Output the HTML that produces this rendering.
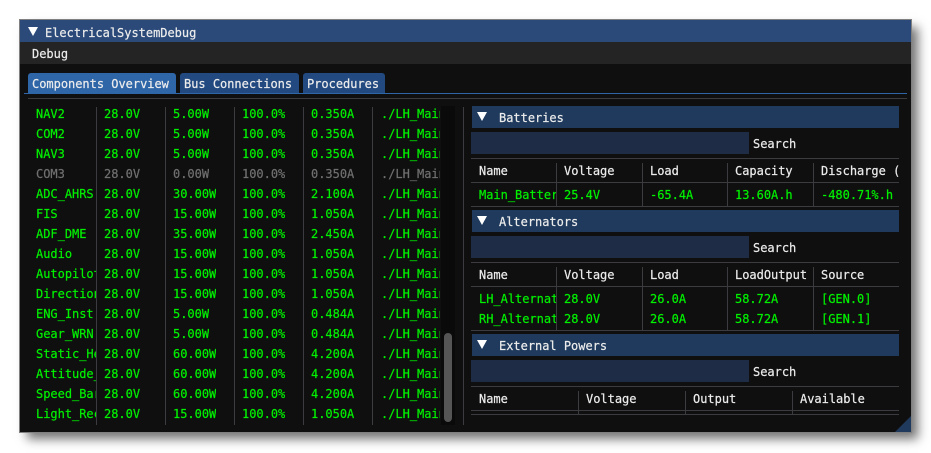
<!DOCTYPE html>
<html><head><meta charset="utf-8"><style>
html,body{margin:0;padding:0;background:#fff;width:931px;height:453px;overflow:hidden}
*{box-sizing:border-box}
#p{position:relative;width:931px;height:453px;overflow:hidden;font:12px/20px "DejaVu Sans Mono","Liberation Mono",monospace;letter-spacing:-.02px;color:#ececec;-webkit-text-stroke:.2px currentColor}
#w{position:absolute;left:20px;top:20px;width:891px;height:412px;background:#0f0f0f;box-shadow:0 0 0 1px #808080,7px 7px 10px rgba(0,0,0,.55)}
.a{position:absolute;white-space:nowrap}
.bar{position:absolute;left:472px;width:427px;height:22px;background:#1f3a5c;padding-left:27px;line-height:24px}
.tri{position:absolute;width:0;height:0;border-left:5.5px solid transparent;border-right:5.5px solid transparent;border-top:9px solid #fff}
.inp{position:absolute;left:471px;width:278px;height:22px;background:#1e2d45}
.h{position:absolute;left:471px;width:428px;height:1px;background:#3c3c40}
.v{position:absolute;width:1px;background:#3c3c40}
.tab{position:absolute;top:73px;height:20px;background:#234a80;border-radius:3px 3px 0 0;line-height:23px;padding-left:4px}
.r{position:absolute;left:0;width:931px;height:20px;color:#00f000}
.r span{position:absolute;top:0;white-space:nowrap;overflow:hidden}
.r.off{color:#707070}
.s1{left:36px;width:60px}.s2{left:104px}.s3{left:173px}.s4{left:242px}.s5{left:311px}.s6{left:381px;width:59px}
.g{color:#00f000}
</style></head><body><div id="p">
<div id="w"></div>
<div class="a" style="left:20px;top:20px;width:891px;height:22px;background:#2b4a7a"></div>
<div class="a" style="left:20px;top:42px;width:891px;height:22px;background:#242424"></div>
<div class="tri" style="left:28px;top:27px"></div>
<div class="a" style="left:45px;top:23px">ElectricalSystemDebug</div>
<div class="a" style="left:32px;top:44px">Debug</div>

<div class="tab" style="left:28px;width:148px;background:#2f66a8">Components Overview</div>
<div class="tab" style="left:180px;width:119px">Bus Connections</div>
<div class="tab" style="left:303px;width:82px">Procedures</div>
<div class="a" style="left:24px;top:93px;width:883px;height:1px;background:#2f66a8"></div>
<div class="a" style="left:28px;top:98px;width:879px;height:1px;background:#3c3c40"></div>

<div class="a" style="left:441px;top:106px;width:14px;height:319px;background:#0a0a0a"></div>
<div class="a" style="left:444px;top:333px;width:8px;height:89px;background:#555;border-radius:4px"></div>
<div class="v" style="left:96px;top:107px;height:318px"></div>
<div class="v" style="left:165px;top:107px;height:318px"></div>
<div class="v" style="left:234px;top:107px;height:318px"></div>
<div class="v" style="left:303px;top:107px;height:318px"></div>
<div class="v" style="left:372px;top:107px;height:318px"></div>
<div class="v" style="left:463px;top:107px;height:318px"></div>

<div class="r" style="top:104px"><span class="s1">NAV2</span><span class="s2">28.0V</span><span class="s3">5.00W</span><span class="s4">100.0%</span><span class="s5">0.350A</span><span class="s6">./LH_Main</span></div>
<div class="r" style="top:124px"><span class="s1">COM2</span><span class="s2">28.0V</span><span class="s3">5.00W</span><span class="s4">100.0%</span><span class="s5">0.350A</span><span class="s6">./LH_Main</span></div>
<div class="r" style="top:144px"><span class="s1">NAV3</span><span class="s2">28.0V</span><span class="s3">5.00W</span><span class="s4">100.0%</span><span class="s5">0.350A</span><span class="s6">./LH_Main</span></div>
<div class="r off" style="top:164px"><span class="s1">COM3</span><span class="s2">28.0V</span><span class="s3">0.00W</span><span class="s4">100.0%</span><span class="s5">0.350A</span><span class="s6">./LH_Main</span></div>
<div class="r" style="top:184px"><span class="s1">ADC_AHRS</span><span class="s2">28.0V</span><span class="s3">30.00W</span><span class="s4">100.0%</span><span class="s5">2.100A</span><span class="s6">./LH_Main</span></div>
<div class="r" style="top:204px"><span class="s1">FIS</span><span class="s2">28.0V</span><span class="s3">15.00W</span><span class="s4">100.0%</span><span class="s5">1.050A</span><span class="s6">./LH_Main</span></div>
<div class="r" style="top:224px"><span class="s1">ADF_DME</span><span class="s2">28.0V</span><span class="s3">35.00W</span><span class="s4">100.0%</span><span class="s5">2.450A</span><span class="s6">./LH_Main</span></div>
<div class="r" style="top:244px"><span class="s1">Audio</span><span class="s2">28.0V</span><span class="s3">15.00W</span><span class="s4">100.0%</span><span class="s5">1.050A</span><span class="s6">./LH_Main</span></div>
<div class="r" style="top:264px"><span class="s1">Autopilot</span><span class="s2">28.0V</span><span class="s3">15.00W</span><span class="s4">100.0%</span><span class="s5">1.050A</span><span class="s6">./LH_Main</span></div>
<div class="r" style="top:284px"><span class="s1">Direction</span><span class="s2">28.0V</span><span class="s3">15.00W</span><span class="s4">100.0%</span><span class="s5">1.050A</span><span class="s6">./LH_Main</span></div>
<div class="r" style="top:304px"><span class="s1">ENG_Inst</span><span class="s2">28.0V</span><span class="s3">5.00W</span><span class="s4">100.0%</span><span class="s5">0.484A</span><span class="s6">./LH_Main</span></div>
<div class="r" style="top:324px"><span class="s1">Gear_WRN</span><span class="s2">28.0V</span><span class="s3">5.00W</span><span class="s4">100.0%</span><span class="s5">0.484A</span><span class="s6">./LH_Main</span></div>
<div class="r" style="top:344px"><span class="s1">Static_Heat</span><span class="s2">28.0V</span><span class="s3">60.00W</span><span class="s4">100.0%</span><span class="s5">4.200A</span><span class="s6">./LH_Main</span></div>
<div class="r" style="top:364px"><span class="s1">Attitude_</span><span class="s2">28.0V</span><span class="s3">60.00W</span><span class="s4">100.0%</span><span class="s5">4.200A</span><span class="s6">./LH_Main</span></div>
<div class="r" style="top:384px"><span class="s1">Speed_Bar</span><span class="s2">28.0V</span><span class="s3">60.00W</span><span class="s4">100.0%</span><span class="s5">4.200A</span><span class="s6">./LH_Main</span></div>
<div class="r" style="top:404px"><span class="s1">Light_Rec</span><span class="s2">28.0V</span><span class="s3">15.00W</span><span class="s4">100.0%</span><span class="s5">1.050A</span><span class="s6">./LH_Main</span></div>

<div class="bar" style="top:106px">Batteries</div><div class="tri" style="left:477px;top:112px"></div>
<div class="inp" style="top:132px"></div><div class="a" style="left:753px;top:134px">Search</div>
<div class="h" style="top:158px"></div><div class="h" style="top:182px"></div><div class="h" style="top:206px"></div>
<div class="v" style="left:556px;top:163px;height:43px"></div><div class="v" style="left:642px;top:163px;height:43px"></div><div class="v" style="left:727px;top:163px;height:43px"></div><div class="v" style="left:813px;top:163px;height:43px"></div>
<div class="a" style="left:479px;top:161px">Name</div><div class="a" style="left:564px;top:161px">Voltage</div><div class="a" style="left:650px;top:161px">Load</div><div class="a" style="left:735px;top:161px">Capacity</div><div class="a" style="left:821px;top:161px;width:78px;overflow:hidden">Discharge (%)</div>
<div class="a g" style="left:479px;top:185px;width:77px;overflow:hidden">Main_Battery</div><div class="a g" style="left:564px;top:185px">25.4V</div><div class="a g" style="left:650px;top:185px">-65.4A</div><div class="a g" style="left:735px;top:185px">13.60A.h</div><div class="a g" style="left:821px;top:185px">-480.71%.h</div>

<div class="bar" style="top:210px">Alternators</div><div class="tri" style="left:477px;top:216px"></div>
<div class="inp" style="top:236px"></div><div class="a" style="left:753px;top:238px">Search</div>
<div class="h" style="top:262px"></div><div class="h" style="top:286px"></div><div class="h" style="top:330px"></div>
<div class="v" style="left:556px;top:267px;height:63px"></div><div class="v" style="left:642px;top:267px;height:63px"></div><div class="v" style="left:727px;top:267px;height:63px"></div><div class="v" style="left:813px;top:267px;height:63px"></div>
<div class="a" style="left:479px;top:265px">Name</div><div class="a" style="left:564px;top:265px">Voltage</div><div class="a" style="left:650px;top:265px">Load</div><div class="a" style="left:735px;top:265px">LoadOutput</div><div class="a" style="left:821px;top:265px">Source</div>
<div class="a g" style="left:479px;top:289px;width:77px;overflow:hidden">LH_Alternator</div><div class="a g" style="left:564px;top:289px">28.0V</div><div class="a g" style="left:650px;top:289px">26.0A</div><div class="a g" style="left:735px;top:289px">58.72A</div><div class="a g" style="left:821px;top:289px">[GEN.0]</div>
<div class="a g" style="left:479px;top:309px;width:77px;overflow:hidden">RH_Alternator</div><div class="a g" style="left:564px;top:309px">28.0V</div><div class="a g" style="left:650px;top:309px">26.0A</div><div class="a g" style="left:735px;top:309px">58.72A</div><div class="a g" style="left:821px;top:309px">[GEN.1]</div>

<div class="bar" style="top:334px">External Powers</div><div class="tri" style="left:477px;top:340px"></div>
<div class="inp" style="top:360px"></div><div class="a" style="left:753px;top:362px">Search</div>
<div class="h" style="top:386px"></div><div class="h" style="top:410px"></div><div class="h" style="top:414px"></div>
<div class="v" style="left:578px;top:391px;height:23px"></div><div class="v" style="left:685px;top:391px;height:23px"></div><div class="v" style="left:792px;top:391px;height:23px"></div>
<div class="a" style="left:479px;top:389px">Name</div><div class="a" style="left:586px;top:389px">Voltage</div><div class="a" style="left:693px;top:389px">Output</div><div class="a" style="left:800px;top:389px">Available</div>

<svg class="a" style="left:895px;top:416px" width="16" height="16"><polygon points="16,0 16,16 0,16" fill="#1f3a5c"/></svg>
</div></body></html>
